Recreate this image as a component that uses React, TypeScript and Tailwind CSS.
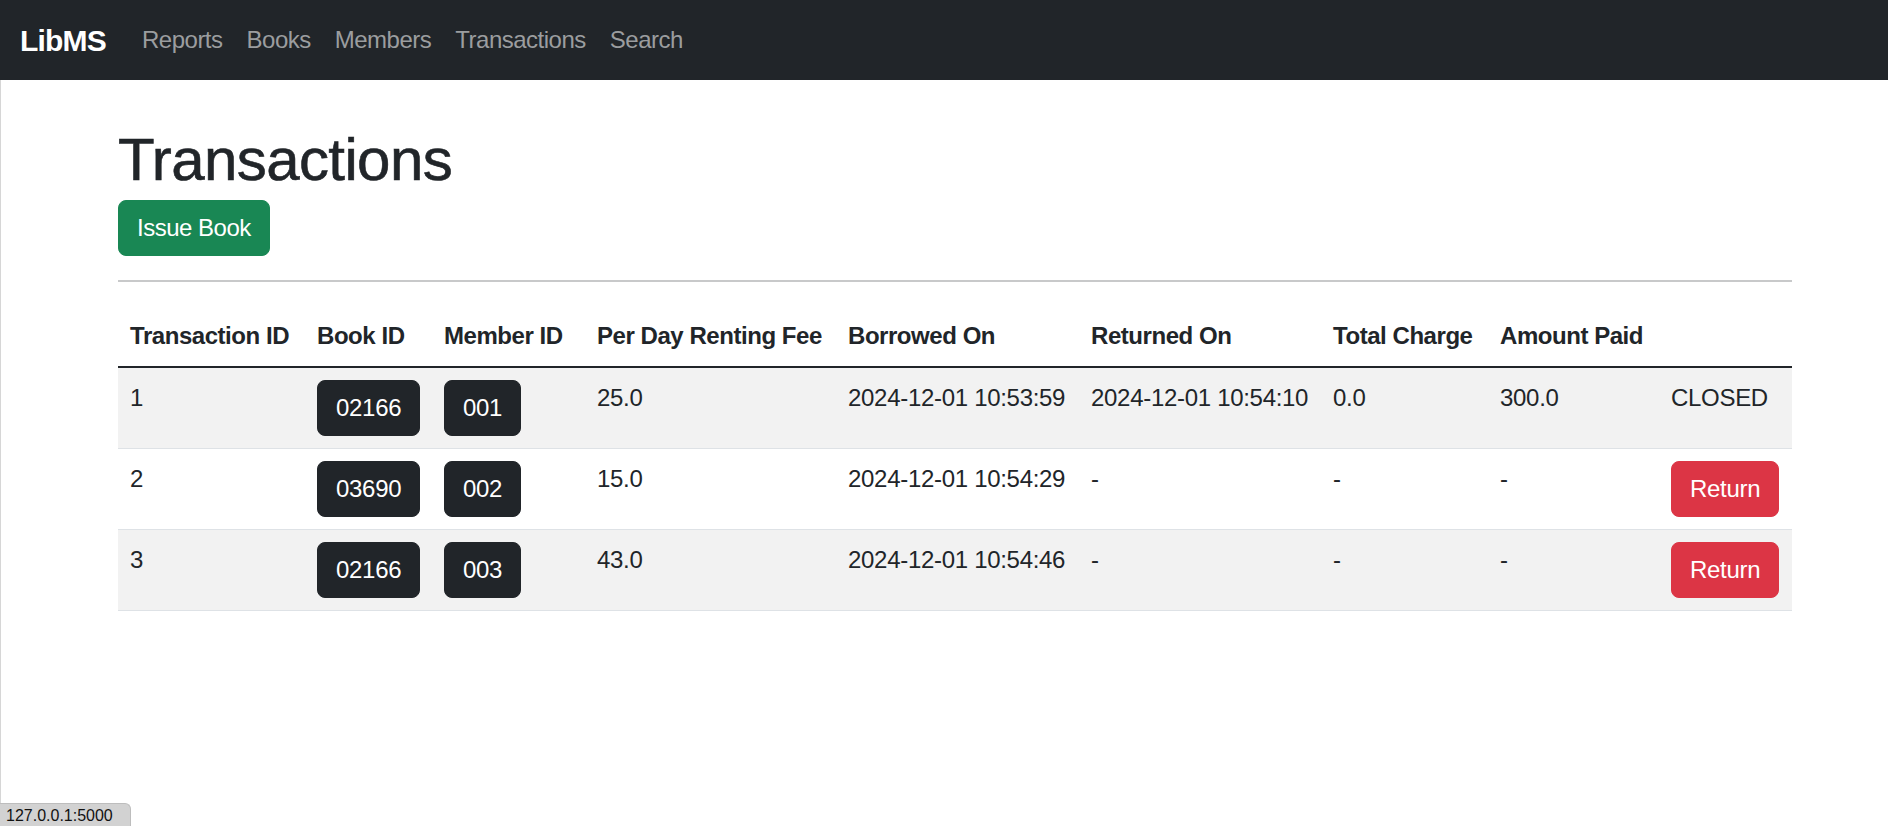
import React from "react";

type Row = {
  id: string;
  book: string;
  member: string;
  fee: string;
  borrowed: string;
  returned: string;
  total: string;
  paid: string;
  closed: boolean;
};

const rows: Row[] = [
  { id: "1", book: "02166", member: "001", fee: "25.0", borrowed: "2024-12-01 10:53:59", returned: "2024-12-01 10:54:10", total: "0.0", paid: "300.0", closed: true },
  { id: "2", book: "03690", member: "002", fee: "15.0", borrowed: "2024-12-01 10:54:29", returned: "-", total: "-", paid: "-", closed: false },
  { id: "3", book: "02166", member: "003", fee: "43.0", borrowed: "2024-12-01 10:54:46", returned: "-", total: "-", paid: "-", closed: false },
];

const headers = [
  "Transaction ID",
  "Book ID",
  "Member ID",
  "Per Day Renting Fee",
  "Borrowed On",
  "Returned On",
  "Total Charge",
  "Amount Paid",
  "",
];

const td = "border-b border-[#dee2e6] px-[12px] py-[12px] align-top";

export default function App() {
  return (
    <div className="relative h-[826px] w-full overflow-hidden bg-white text-[#212529] font-['Liberation_Sans',sans-serif]">
      <nav className="flex h-[80px] items-center bg-[#212529] px-[20px]">
        <span className="mr-[24px] text-[30px] font-bold leading-[45px] tracking-[-0.8px] text-white">LibMS</span>
        {["Reports", "Books", "Members", "Transactions", "Search"].map((l) => (
          <span key={l} className="px-[12px] text-[24px] leading-[36px] tracking-[-0.5px] text-[#9b9d9f]">
            {l}
          </span>
        ))}
      </nav>
      <main className="h-[746px] border-l border-[#d6d6d6]">
        <div className="ml-[117px] w-[1674px] pt-[36px]">
          <h1 className="mb-[4px] pt-[8px] text-[60px] font-medium leading-[72px] tracking-[-0.6px] [-webkit-text-stroke:0.6px_#212529]">
            Transactions
          </h1>
          <button className="rounded-[8px] border border-[#198754] bg-[#198754] px-[18px] py-[9px] text-[24px] leading-[36px] tracking-[-0.5px] text-white">
            Issue Book
          </button>
          <div className="my-[24px] h-[2px] bg-[#c8c9ca]" />
          <table className="w-full table-fixed border-collapse text-[24px] leading-[36px] tracking-[-0.3px]">
            <colgroup>
              <col className="w-[187px]" />
              <col className="w-[127px]" />
              <col className="w-[153px]" />
              <col className="w-[251px]" />
              <col className="w-[243px]" />
              <col className="w-[242px]" />
              <col className="w-[167px]" />
              <col className="w-[171px]" />
              <col className="w-[133px]" />
            </colgroup>
            <thead>
              <tr>
                {headers.map((h, i) => (
                  <th
                    key={i}
                    className="whitespace-nowrap border-b-2 border-[#212529] px-[12px] py-[12px] text-left font-bold tracking-[-0.45px]"
                  >
                    {h}
                  </th>
                ))}
              </tr>
            </thead>
            <tbody>
              {rows.map((r, idx) => (
                <tr key={r.id} className={idx % 2 === 0 ? "bg-[#f2f2f2]" : "bg-white"}>
                  <td className={td}>{r.id}</td>
                  <td className={td}>
                    <span className="inline-block rounded-[8px] border border-[#212529] bg-[#212529] px-[18px] py-[9px] leading-[36px] text-white">
                      {r.book}
                    </span>
                  </td>
                  <td className={td}>
                    <span className="inline-block rounded-[8px] border border-[#212529] bg-[#212529] px-[18px] py-[9px] leading-[36px] text-white">
                      {r.member}
                    </span>
                  </td>
                  <td className={td}>{r.fee}</td>
                  <td className={`${td} whitespace-nowrap`}>{r.borrowed}</td>
                  <td className={`${td} whitespace-nowrap`}>{r.returned}</td>
                  <td className={td}>{r.total}</td>
                  <td className={td}>{r.paid}</td>
                  <td className={td}>
                    {r.closed ? (
                      "CLOSED"
                    ) : (
                      <button className="rounded-[8px] border border-[#dc3545] bg-[#dc3545] px-[18px] py-[9px] leading-[36px] tracking-[-0.3px] text-white">
                        Return
                      </button>
                    )}
                  </td>
                </tr>
              ))}
            </tbody>
          </table>
        </div>
      </main>
      <div className="absolute bottom-0 left-0 h-[23px] w-[131px] rounded-tr-[6px] border-t border-r border-[#bdbdbd] bg-[#d2d2d2] pl-[6px] text-[16px] leading-[23px] text-[#111]">
        127.0.0.1:5000
      </div>
    </div>
  );
}
